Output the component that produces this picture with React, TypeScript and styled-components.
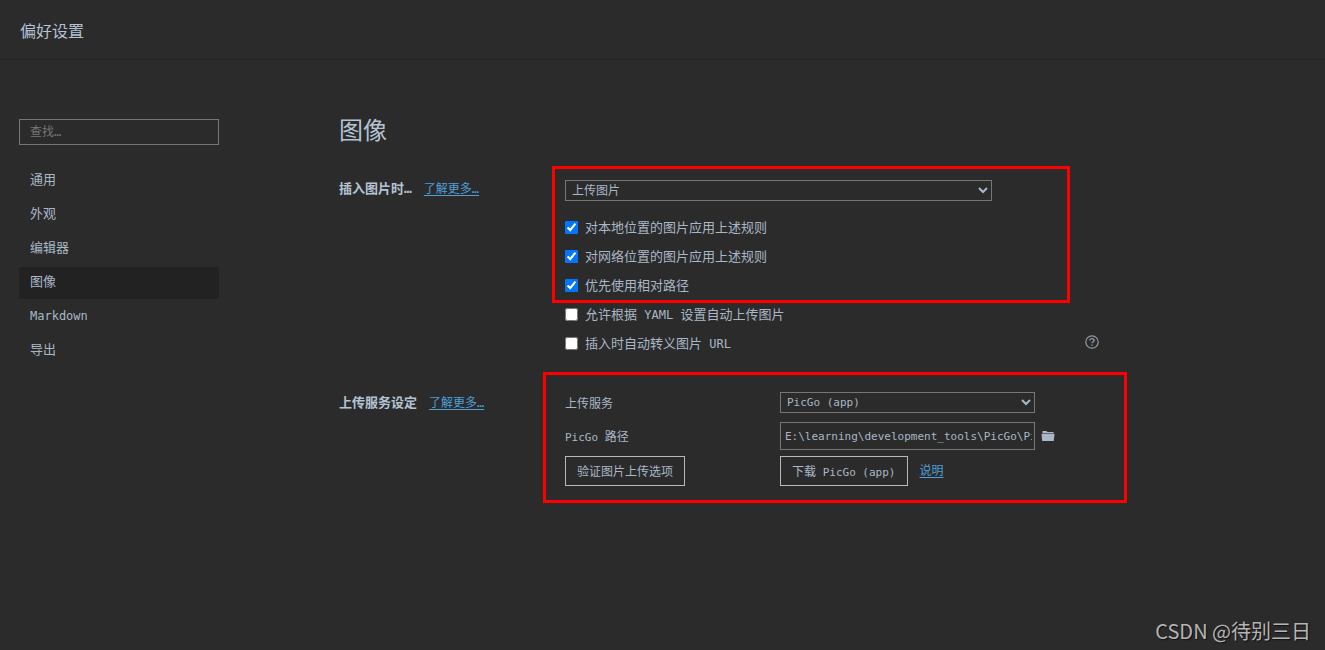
import React, { useState } from 'react';
import styled, { createGlobalStyle } from 'styled-components';

const fontStack = '"DejaVu Sans Mono", "Noto Sans CJK SC", monospace';

const GlobalStyle = createGlobalStyle`
  * { box-sizing: border-box; }
  html, body { margin: 0; background: #2b2b2b; }
  body { color: #a9b7c6; font: 13px/20px ${fontStack}; }
  button, input, select { font-family: inherit; color: inherit; }
`;

const Page = styled.div`
  position: relative;
  min-height: 100vh;
  border-top: 1px solid #2b2b31;
`;

const Header = styled.header`
  display: flex;
  align-items: center;
  height: 59px;
  padding: 3px 20px 0;
  border-bottom: 1px solid #262626;
`;

const HeaderTitle = styled.h1`
  margin: 0;
  font-size: 16px;
  line-height: 24px;
  font-weight: 400;
  color: #b4c3d3;
`;

const Body = styled.div`
  display: flex;
  gap: 120px;
  padding: 57px 19px 40px;
`;

const Sidebar = styled.aside`
  flex: 0 0 200px;
  padding-top: 2px;
`;

const TextField = styled.input`
  width: 100%;
  min-width: 0;
  border: 1px solid #767676;
  border-radius: 0;
  background: transparent;
  outline: none;
`;

const SearchField = styled(TextField)`
  display: block;
  height: 26px;
  padding: 0 10px;
  font-size: 12px;
  &::placeholder { color: #757575; }
`;

const Nav = styled.nav`
  display: flex;
  flex-direction: column;
  gap: 2px;
  margin-top: 20px;
`;

const NavItem = styled.a<{ $active?: boolean }>`
  height: 32px;
  padding: 0 11px;
  line-height: 30px;
  border-radius: 2px;
  color: inherit;
  text-decoration: none;
  background: ${(p) => (p.$active ? '#222222' : 'transparent')};
`;

const Main = styled.main`
  flex: 1;
  min-width: 0;
  max-width: 760px;
`;

const PageTitle = styled.h2`
  margin: 0 0 35px;
  font-size: 24px;
  line-height: 28px;
  font-weight: 400;
  color: #b4c3d3;
`;

const Section = styled.section`
  display: grid;
  grid-template-columns: 226px minmax(0, 1fr);
  & + & { margin-top: 30px; }
`;

const SectionLabel = styled.div<{ $height: number }>`
  display: flex;
  align-items: center;
  gap: 12px;
  height: ${(p) => p.$height}px;
`;

const SectionName = styled.h3`
  margin: 0;
  font-size: 13px;
  font-weight: 700;
  color: #b4c3d3;
`;

const Link = styled.a`
  font-size: 12px;
  color: #4f9fd8;
  text-underline-offset: 2px;
`;

const Highlight = styled.div<{ $inset: string }>`
  position: relative;
  &::after {
    content: '';
    position: absolute;
    inset: ${(p) => p.$inset};
    border: 3px solid #ff0000;
    pointer-events: none;
  }
`;

const Select = styled.select<{ $width: string }>`
  display: block;
  width: ${(p) => p.$width};
  height: 21px;
  padding: 0 2px;
  border: 1px solid #767676;
  border-radius: 0;
  background-color: #2b2b2b;
  font-size: ${(p) => (p.$width === '100%' ? 11 : 12)}px;
`;

const CheckList = styled.div`
  margin-top: 12px;
`;

const CheckRow = styled.div`
  display: flex;
  align-items: center;
  justify-content: space-between;
  height: 29px;
`;

const CheckLabel = styled.label`
  display: flex;
  align-items: center;
  gap: 7px;
`;

const CheckBox = styled.input`
  width: 13px;
  height: 13px;
  margin: 0;
`;

const Latin = styled.span<{ $size: number }>`
  font-size: ${(p) => p.$size}px;
`;

const IconButton = styled.button`
  display: flex;
  padding: 0;
  border: 0;
  background: none;
`;

const HelpButton = styled(IconButton)`
  padding: 0 0 3px;
`;

const UploadGrid = styled.div`
  display: grid;
  grid-template-columns: 215px 255px auto;
  grid-template-rows: 28px 28px 30px;
  row-gap: 6px;
  align-items: center;
  justify-content: start;
`;

const FieldLabel = styled.label`
  padding-top: 3px;
  font-size: 12px;
`;

const PathField = styled(TextField)`
  height: 28px;
  padding: 0 2px 0 4px;
  font-size: 11px;
`;

const FolderButton = styled(IconButton)`
  margin-left: 6px;
`;

const Button = styled.button`
  height: 30px;
  padding: 0 11px 2px;
  border: 1px solid #b8b8b8;
  border-radius: 0;
  background: transparent;
  font-size: 12px;
  white-space: nowrap;
`;

const Actions = styled.div`
  display: flex;
  align-items: center;
  gap: 12px;
`;

const Watermark = styled.div`
  position: absolute;
  right: 14px;
  bottom: 5px;
  font: 20px/28px "Noto Sans CJK SC", sans-serif;
  color: #b4b4b4;
  text-shadow: 1px 1px 1px #111111;
`;

const navItems = ['通用', '外观', '编辑器', '图像', 'Markdown', '导出'];

function CheckOption({ initial, children, extra }: {
  initial: boolean;
  children: React.ReactNode;
  extra?: React.ReactNode;
}) {
  const [checked, setChecked] = useState(initial);
  return (
    <CheckRow>
      <CheckLabel>
        <CheckBox type="checkbox" checked={checked} onChange={(e) => setChecked(e.target.checked)} />
        <span>{children}</span>
      </CheckLabel>
      {extra}
    </CheckRow>
  );
}

function HelpIcon() {
  return (
    <svg width="14" height="14" viewBox="0 0 14 14" fill="none" stroke="#8f99a5" strokeWidth="1.2">
      <circle cx="7" cy="7" r="6.2" />
      <path d="M4.9 5.6C4.9 4.3 5.8 3.6 7 3.6s2.1.7 2.1 1.8C9.1 6.7 7.1 6.8 7.1 8.3" strokeWidth="1.4" />
      <path d="M7.1 9.4v1.4" strokeWidth="1.4" />
    </svg>
  );
}

function FolderIcon() {
  return (
    <svg width="14" height="12" viewBox="0 0 14 12" fill="#a9b7c6">
      <path d="M1.5 1h4l1 1h6v1.2h-11z" />
      <path d="M.5 3.8h13L12.8 11H1.2z" />
    </svg>
  );
}

export default function App() {
  const [active, setActive] = useState('图像');
  return (
    <Page>
      <GlobalStyle />
      <Header>
        <HeaderTitle>偏好设置</HeaderTitle>
      </Header>
      <Body>
        <Sidebar>
          <SearchField type="text" placeholder="查找…" aria-label="查找" />
          <Nav>
            {navItems.map((name) => (
              <NavItem key={name} href="#" $active={name === active} onClick={() => setActive(name)}>
                {name === 'Markdown' ? <Latin $size={12}>{name}</Latin> : name}
              </NavItem>
            ))}
          </Nav>
        </Sidebar>
        <Main>
          <PageTitle>图像</PageTitle>
          <Section>
            <SectionLabel $height={18}>
              <SectionName>插入图片时…</SectionName>
              <Link href="#">了解更多…</Link>
            </SectionLabel>
            <div>
              <Highlight $inset="-14px 29px -3px -13px">
                <Select $width="80%" aria-label="插入图片时">
                  <option>上传图片</option>
                </Select>
                <CheckList>
                  <CheckOption initial>对本地位置的图片应用上述规则</CheckOption>
                  <CheckOption initial>对网络位置的图片应用上述规则</CheckOption>
                  <CheckOption initial>优先使用相对路径</CheckOption>
                </CheckList>
              </Highlight>
              <CheckOption initial={false}>
                允许根据<Latin $size={12}> YAML </Latin>设置自动上传图片
              </CheckOption>
              <CheckOption
                initial={false}
                extra={<HelpButton type="button" aria-label="帮助"><HelpIcon /></HelpButton>}
              >
                插入时自动转义图片<Latin $size={12}> URL</Latin>
              </CheckOption>
            </div>
          </Section>
          <Section>
            <SectionLabel $height={30}>
              <SectionName>上传服务设定</SectionName>
              <Link href="#">了解更多…</Link>
            </SectionLabel>
            <Highlight $inset="-16px -28px -17px -22px">
              <UploadGrid>
                <FieldLabel htmlFor="service">上传服务</FieldLabel>
                <Select id="service" $width="100%">
                  <option>PicGo (app)</option>
                </Select>
                <span />
                <FieldLabel htmlFor="path"><Latin $size={11}>PicGo </Latin>路径</FieldLabel>
                <PathField id="path" type="text" defaultValue="E:\learning\development_tools\PicGo\PicGo.exe" />
                <FolderButton type="button" aria-label="浏览"><FolderIcon /></FolderButton>
                <div><Button type="button">验证图片上传选项</Button></div>
                <Actions>
                  <Button type="button">下载<Latin $size={11}> PicGo (app)</Latin></Button>
                  <Link href="#">说明</Link>
                </Actions>
              </UploadGrid>
            </Highlight>
          </Section>
        </Main>
      </Body>
      <Watermark>CSDN @待别三日</Watermark>
    </Page>
  );
}
